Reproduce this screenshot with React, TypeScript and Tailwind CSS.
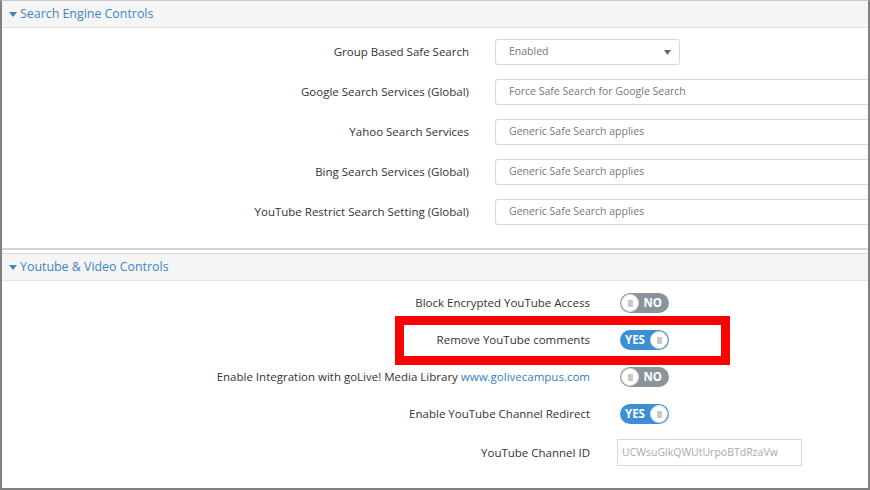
import React from "react";

const font = { fontFamily: '"Open Sans", "Noto Sans", sans-serif' };

function Caret() {
  return (
    <svg width="8" height="5" viewBox="0 0 8 5" className="mr-[3px]">
      <path d="M0 0h8L4 5z" fill="#3b86c6" />
    </svg>
  );
}

function PanelHeader({ title }: { title: string }) {
  return (
    <div className="flex items-center h-[27px] pl-[7px] bg-[#f5f5f5] border-b border-[#e2e2e2] text-[12.4px] text-[#3b86c6]">
      <Caret />
      <span>{title}</span>
    </div>
  );
}

function InputRow({ label, value, select }: { label: string; value: string; select?: boolean }) {
  return (
    <div className="flex items-center h-[26px]">
      <div className="w-[469px] shrink-0 text-right text-[11.5px] text-[#333]">{label}</div>
      <div
        className={
          "ml-[26px] h-[26px] shrink-0 flex items-center pl-[13px] pr-[8px] border border-[#d9d9d9] rounded-[3px] bg-white text-[10.5px] text-[#777] " +
          (select ? "w-[185px] justify-between" : "w-[420px]")
        }
      >
        <span>{value}</span>
        {select && (
          <svg width="7" height="5" viewBox="0 0 7 5">
            <path d="M0 0h7L3.5 5z" fill="#666" />
          </svg>
        )}
      </div>
    </div>
  );
}

function Toggle({ on }: { on: boolean }) {
  const knob = (
    <div className="w-[18px] h-[18px] rounded-full bg-white border border-[#ddd] flex items-center justify-center">
      <div className="w-[5px] h-[7px] bg-[#c8c8c8]" />
    </div>
  );
  return (
    <div
      className={
        "w-[49px] h-[20px] rounded-full flex items-center px-[1px] text-[11.5px] font-bold text-white " +
        (on ? "bg-[#3c8fd5] justify-between pl-[5px]" : "bg-[#8a949c] justify-between pr-[7px]")
      }
    >
      {on ? (
        <>
          <span>YES</span>
          {knob}
        </>
      ) : (
        <>
          {knob}
          <span>NO</span>
        </>
      )}
    </div>
  );
}

function ToggleRow({ label, on }: { label: React.ReactNode; on: boolean }) {
  return (
    <div className="flex items-center h-[20px]">
      <div className="w-[590px] shrink-0 text-right text-[11.5px] text-[#333] whitespace-nowrap">{label}</div>
      <div className="ml-[30px]">
        <Toggle on={on} />
      </div>
    </div>
  );
}

export default function App() {
  return (
    <div
      className="relative w-[870px] h-[490px] overflow-hidden bg-white border-2 border-[#808080] border-t-[#c9c9c9] border-t"
      style={font}
    >
      {/* Search Engine Controls */}
      <div className="border-b-2 border-[#d4d4d4]">
        <PanelHeader title="Search Engine Controls" />
        <div className="flex flex-col gap-[14px] pt-[11px] pb-[23px] -ml-[2px]">
          <InputRow label="Group Based Safe Search" value="Enabled" select />
          <InputRow label="Google Search Services (Global)" value="Force Safe Search for Google Search" />
          <InputRow label="Yahoo Search Services" value="Generic Safe Search applies" />
          <InputRow label="Bing Search Services (Global)" value="Generic Safe Search applies" />
          <InputRow label="YouTube Restrict Search Setting (Global)" value="Generic Safe Search applies" />
        </div>
      </div>

      {/* Youtube & Video Controls */}
      <div className="mt-[3px] border-t border-[#dcdcdc]">
        <PanelHeader title="Youtube & Video Controls" />
        <div className="flex flex-col gap-[17px] pt-[12px] -ml-[2px]">
          <ToggleRow label="Block Encrypted YouTube Access" on={false} />
          <ToggleRow label="Remove YouTube comments" on />
          <ToggleRow
            label={
              <>
                Enable Integration with goLive! Media Library{" "}
                <span className="text-[#2f7fc8]">www.golivecampus.com</span>
              </>
            }
            on={false}
          />
          <ToggleRow label="Enable YouTube Channel Redirect" on />
          <div className="flex items-center h-[27px] -mt-[2px]">
            <div className="w-[590px] shrink-0 text-right text-[11.5px] text-[#333]">YouTube Channel ID</div>
            <div className="ml-[27px] w-[185px] h-[27px] flex items-center pl-[4px] border border-[#d9d9d9] text-[10.5px] text-[#aaa]">
              UCWsuGlkQWUtUrpoBTdRzaVw
            </div>
          </div>
        </div>
      </div>

      {/* Highlight box */}
      <div className="absolute left-[393px] top-[315px] w-[335px] h-[49px] border-[9px] border-[#ff0000]" />
    </div>
  );
}
